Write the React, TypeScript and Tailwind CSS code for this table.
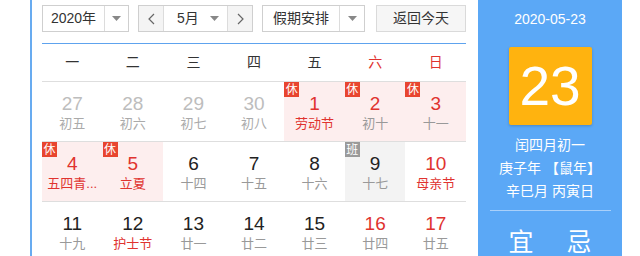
import React from "react";

type Day = {
  n: number;
  sub: string;
  tone: "muted" | "normal" | "weekend";
  badge?: "休" | "班";
  festival?: boolean;
};

const WEEK = ["一", "二", "三", "四", "五", "六", "日"];

const ROWS: Day[][] = [
  [
    { n: 27, sub: "初五", tone: "muted" },
    { n: 28, sub: "初六", tone: "muted" },
    { n: 29, sub: "初七", tone: "muted" },
    { n: 30, sub: "初八", tone: "muted" },
    { n: 1, sub: "劳动节", tone: "weekend", badge: "休", festival: true },
    { n: 2, sub: "初十", tone: "weekend", badge: "休" },
    { n: 3, sub: "十一", tone: "weekend", badge: "休" },
  ],
  [
    { n: 4, sub: "五四青...", tone: "weekend", badge: "休", festival: true },
    { n: 5, sub: "立夏", tone: "weekend", badge: "休", festival: true },
    { n: 6, sub: "十四", tone: "normal" },
    { n: 7, sub: "十五", tone: "normal" },
    { n: 8, sub: "十六", tone: "normal" },
    { n: 9, sub: "十七", tone: "normal", badge: "班" },
    { n: 10, sub: "母亲节", tone: "weekend", festival: true },
  ],
  [
    { n: 11, sub: "十九", tone: "normal" },
    { n: 12, sub: "护士节", tone: "normal", festival: true },
    { n: 13, sub: "廿一", tone: "normal" },
    { n: 14, sub: "廿二", tone: "normal" },
    { n: 15, sub: "廿三", tone: "normal" },
    { n: 16, sub: "廿四", tone: "weekend" },
    { n: 17, sub: "廿五", tone: "weekend" },
  ],
];

const FONT = "font-['Liberation_Sans','Noto_Sans_CJK_SC',sans-serif]";

function Caret() {
  return (
    <svg width="9" height="5" viewBox="0 0 9 5">
      <path d="M0 0h9L4.5 5z" fill="#888" />
    </svg>
  );
}

function Chevron({ dir }: { dir: "left" | "right" }) {
  return (
    <svg width="7" height="12" viewBox="0 0 7 12">
      <polyline
        points={dir === "left" ? "6,1 1,6 6,11" : "1,1 6,6 1,11"}
        fill="none"
        stroke="#666"
        strokeWidth="1.2"
      />
    </svg>
  );
}

function Select({ label, width, textW }: { label: string; width: string; textW: string }) {
  return (
    <div className={`flex h-[27px] ${width} items-stretch border border-[#cfcfcf] bg-white`}>
      <div className={`flex ${textW} items-center justify-center text-[14px] text-[#333]`}>{label}</div>
      <div className="flex flex-1 items-center justify-center border-l border-[#dcdcdc]">
        <Caret />
      </div>
    </div>
  );
}

function Cell({ d }: { d: Day }) {
  const holiday = d.badge === "休";
  const work = d.badge === "班";
  const bg = holiday ? "bg-[#fdeeee]" : work ? "bg-[#f3f3f3]" : "bg-white";
  const numColor =
    d.tone === "muted" ? "text-[#bdbdbd]" : d.tone === "weekend" ? "text-[#e0332f]" : "text-[#222]";
  const subColor = d.festival ? "text-[#e0332f]" : d.tone === "muted" ? "text-[#aaa]" : "text-[#999]";
  return (
    <div className={`relative h-[60px] border-b border-[#dedede] pt-[11px] text-center ${bg}`}>
      {d.badge && (
        <span
          className={`absolute left-0 top-0 flex h-[15px] w-[15px] items-center justify-center text-[12px] leading-none text-white ${
            holiday ? "bg-[#e8452f]" : "bg-[#9a9a9a]"
          }`}
        >
          {d.badge}
        </span>
      )}
      <div className={`text-[19px] leading-[22px] ${numColor}`}>{d.n}</div>
      <div className={`whitespace-nowrap text-[13px] leading-[18px] ${subColor}`}>{d.sub}</div>
    </div>
  );
}

export default function App() {
  return (
    <div className={`flex h-[256px] w-[640px] overflow-hidden bg-white ${FONT}`}>
      <div className="ml-[30px] flex border-l-2 border-[#68abf0]">
        <div className="ml-[10px] w-[424px]">
          <div className="flex h-[44px] items-start border-b border-[#5ea3ee] pt-[5px]">
            <Select label="2020年" width="w-[87px]" textW="w-[61px]" />
            <div className="ml-[9px] flex h-[27px] w-[115px] items-stretch border border-[#cfcfcf]">
              <div className="flex w-[24px] items-center justify-center bg-[#f4f4f4]">
                <Chevron dir="left" />
              </div>
              <div className="flex flex-1 items-center border-x border-[#dcdcdc] bg-white pl-[13px] pr-[8px] text-[14px] text-[#333]">
                <span className="flex-1">5月</span>
                <Caret />
              </div>
              <div className="flex w-[24px] items-center justify-center bg-[#f4f4f4]">
                <Chevron dir="right" />
              </div>
            </div>
            <div className="ml-[9px]">
              <Select label="假期安排" width="w-[103px]" textW="w-[76px]" />
            </div>
            <button
              type="button"
              className="ml-[11px] h-[27px] w-[90px] border border-[#dadada] bg-[#f6f6f6] text-[14px] text-[#333]"
            >
              返回今天
            </button>
          </div>

          <div className="grid h-[38px] grid-cols-7 items-center border-b border-[#dedede] text-center text-[14px]">
            {WEEK.map((w, i) => (
              <div key={w} className={i >= 5 ? "text-[#e0332f]" : "text-[#333]"}>
                {w}
              </div>
            ))}
          </div>

          {ROWS.map((row, r) => (
            <div key={r} className="grid grid-cols-7">
              {row.map((d) => (
                <Cell key={`${r}-${d.n}`} d={d} />
              ))}
            </div>
          ))}
        </div>

        <div className="ml-[12px] flex w-[144px] flex-col items-center bg-[#5ba8f6] text-white">
          <div className="mt-[10px] text-[14px] leading-[18px]">2020-05-23</div>
          <div className="mt-[19px] flex h-[82px] w-[83px] items-center justify-center rounded-[2px] bg-[#ffb30f] text-[55px] leading-none shadow-[0_1px_3px_rgba(0,0,0,0.2)]">
            23
          </div>
          <div className="mt-[9px] text-center text-[14px] leading-[23px]">
            <div>闰四月初一</div>
            <div>庚子年 【鼠年】</div>
            <div>辛巳月 丙寅日</div>
          </div>
          <div className="mt-[7px] h-px w-[121px] bg-[#a9d0fa]" />
          <div className="mt-[17px] flex w-full justify-around px-[14px] text-[25px] leading-[28px]">
            <span>宜</span>
            <span>忌</span>
          </div>
        </div>
      </div>
    </div>
  );
}
